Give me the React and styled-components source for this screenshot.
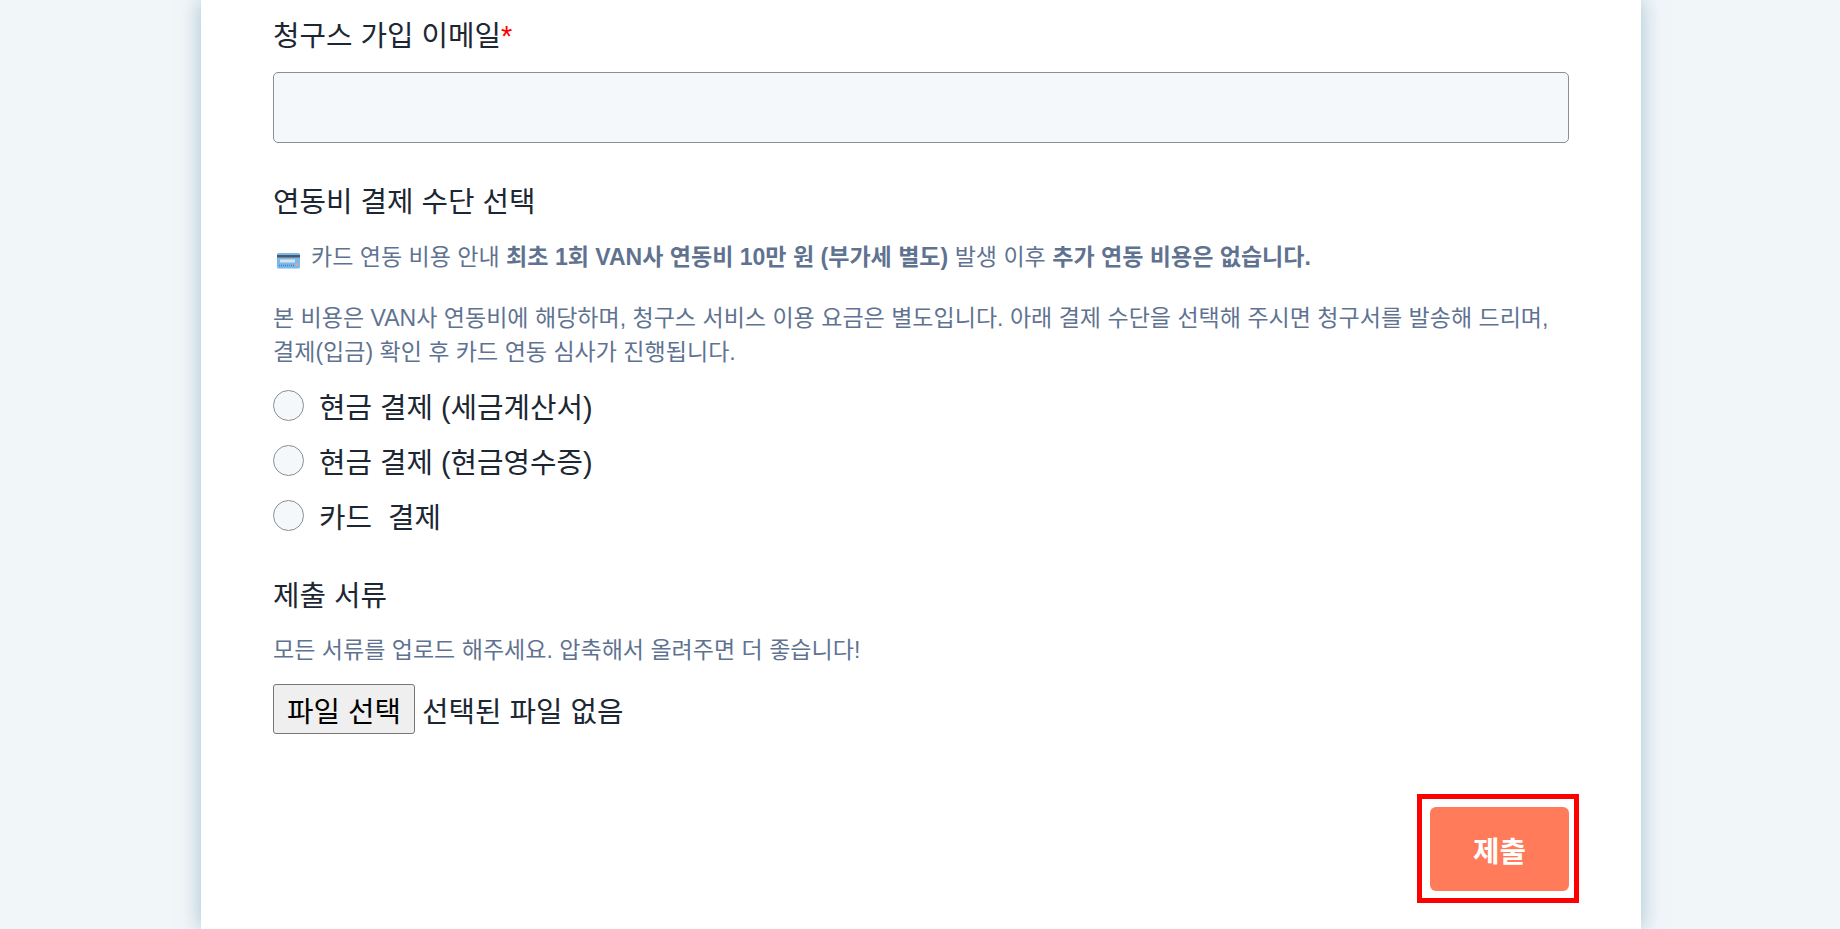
import React from 'react'
import styled, { createGlobalStyle } from 'styled-components'

const GlobalStyle = createGlobalStyle`
  html, body {
    margin: 0;
    height: 100%;
    overflow: hidden;
    background: #f1f6f9;
    font-family: "Liberation Sans", "Noto Sans CJK KR", sans-serif;
  }
`

const Page = styled.div`
  display: flex;
  justify-content: center;
  height: 929px;
  padding-left: 2px;
  overflow: hidden;
`
const Card = styled.form`
  box-sizing: border-box;
  width: 1440px;
  height: 929px;
  padding: 16px 72px 0;
  background: #fff;
  box-shadow: 0 0 20px rgba(90, 140, 170, 0.5);
`
const Label = styled.div`
  font-size: 28.8px;
  line-height: 40px;
  color: #1c2733;
`
const Required = styled.span`
  color: #f00;
`
const TextInput = styled.input`
  display: block;
  box-sizing: border-box;
  width: 100%;
  height: 71px;
  margin: 16px 0 39px;
  background: #f4f8fb;
  border: 1px solid #8a8f94;
  border-radius: 5px;
`
const Notice = styled.p`
  display: flex;
  align-items: center;
  margin: 18px 0 0;
  font-size: 23.04px;
  line-height: 34px;
  color: #5f7391;
  b {
    font-weight: 700;
  }
`
const CardIcon = styled.svg`
  width: 23px;
  height: 17px;
  margin: 6px 11px 0 4px;
  flex: none;
`
const Help = styled.p`
  margin: ${p => p.$top}px 0 0;
  font-size: 23.04px;
  line-height: 34px;
  color: #5f7391;
`
const RadioGroup = styled.div`
  display: flex;
  flex-direction: column;
  gap: 24px;
  margin: 21px 0 45px;
`
const RadioRow = styled.label`
  display: flex;
  align-items: center;
  gap: 15px;
  height: 31px;
  font-size: 28.8px;
  color: #1c2733;
  white-space: pre;
`
const RadioDot = styled.span`
  box-sizing: border-box;
  width: 31px;
  height: 31px;
  border-radius: 50%;
  background: #f4f8fb;
  border: 1px solid #8a8f94;
`
const FileRow = styled.div`
  display: flex;
  align-items: center;
  gap: 7px;
  margin-top: 17px;
  font-size: 28.8px;
  color: #1c2733;
`
const FileButton = styled.span`
  box-sizing: border-box;
  display: flex;
  align-items: center;
  justify-content: center;
  width: 142px;
  height: 50px;
  background: #efefef;
  border: 1px solid #767676;
  border-radius: 3px;
  color: #000;
`
const Actions = styled.div`
  display: flex;
  justify-content: flex-end;
  margin: 60px -10px 0 0;
`
const SubmitFrame = styled.div`
  box-sizing: border-box;
  width: 162px;
  height: 109px;
  padding: 8px 5px 7px 8px;
  border: 5px solid #f00;
`
const SubmitButton = styled.button`
  display: block;
  width: 139px;
  height: 84px;
  border: 0;
  border-radius: 6px;
  background: #ff7b5a;
  color: #fff;
  font: 700 28.8px "Liberation Sans", "Noto Sans CJK KR", sans-serif;
`

const CreditCard = () => (
  <CardIcon viewBox="0 0 23 17">
    <rect x="0" y="1" width="23" height="15.5" rx="1.5" fill="#79b8ea" />
    <rect x="0" y="3" width="23" height="2.5" fill="#4d5563" />
    <rect x="3" y="7.5" width="15" height="3" fill="#dde3e8" />
    <line x1="2" y1="13.5" x2="18" y2="13.5" stroke="#3f83c4" strokeWidth="1.5" strokeDasharray="1 1" />
    <circle cx="20" cy="12.5" r="1.4" fill="#e8a58c" />
  </CardIcon>
)

const methods = ['현금 결제 (세금계산서)', '현금 결제 (현금영수증)', '카드  결제']

export default function App() {
  return (
    <>
      <GlobalStyle />
      <Page>
        <Card>
          <Label>
            청구스 가입 이메일<Required>*</Required>
          </Label>
          <TextInput type="text" />
          <Label>연동비 결제 수단 선택</Label>
          <Notice>
            <CreditCard />
            <span>
              카드 연동 비용 안내 <b>최초 1회 VAN사 연동비 10만 원 (부가세 별도)</b> 발생 이후{' '}
              <b>추가 연동 비용은 없습니다.</b>
            </span>
          </Notice>
          <Help $top={27}>
            본 비용은 VAN사 연동비에 해당하며, 청구스 서비스 이용 요금은 별도입니다. 아래 결제 수단을 선택해 주시면 청구서를 발송해 드리며,
            <br />
            결제(입금) 확인 후 카드 연동 심사가 진행됩니다.
          </Help>
          <RadioGroup>
            {methods.map(m => (
              <RadioRow key={m}>
                <RadioDot />
                {m}
              </RadioRow>
            ))}
          </RadioGroup>
          <Label>제출 서류</Label>
          <Help $top={17}>모든 서류를 업로드 해주세요. 압축해서 올려주면 더 좋습니다!</Help>
          <FileRow>
            <FileButton>파일 선택</FileButton>
            선택된 파일 없음
          </FileRow>
          <Actions>
            <SubmitFrame>
              <SubmitButton type="button">제출</SubmitButton>
            </SubmitFrame>
          </Actions>
        </Card>
      </Page>
    </>
  )
}
